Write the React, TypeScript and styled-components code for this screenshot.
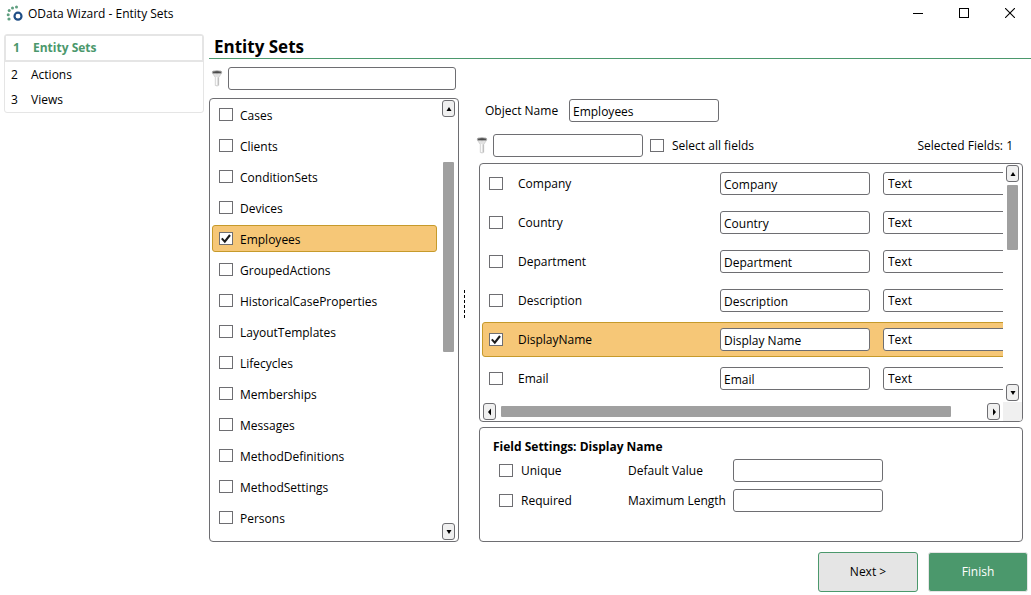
import React, { useState } from 'react';
import styled, { createGlobalStyle, css } from 'styled-components';

const GREEN = '#4b986c';
const LINE = '#6e6e72';

const Global = createGlobalStyle`
  *, *::before, *::after { box-sizing: border-box; }
  body { margin: 0; background: #fff; }
  body, button, input, select {
    font-family: "Open Sans", "Noto Sans", sans-serif;
    font-size: 12px;
    line-height: 16px;
    color: #000;
  }
`;

const Window = styled.div`
  display: flex;
  flex-direction: column;
  height: 100vh;
  min-height: 560px;
  overflow: hidden;
`;

const TitleBar = styled.header`
  display: flex;
  align-items: center;
  flex: none;
  height: 28px;
  padding-left: 6px;
  gap: 5px;
`;

const TitleText = styled.span`
  flex: 1;
`;

const CaptionButton = styled.button`
  display: flex;
  align-items: center;
  justify-content: center;
  width: 46px;
  height: 28px;
  padding: 0 0 2px 4px;
  border: 0;
  background: none;
`;

const Body = styled.div`
  display: flex;
  flex: 1;
  min-height: 0;
  gap: 5px;
  padding-left: 4px;
`;

const Steps = styled.nav`
  flex: none;
  align-self: flex-start;
  width: 200px;
  margin-top: 6px;
  border: 1px solid #e5e5e5;
  border-radius: 3px;
`;

const Step = styled.a<{ $active?: boolean }>`
  display: flex;
  align-items: center;
  height: 25px;
  padding-left: 6px;
  color: #000;
  text-decoration: none;
  ${p => p.$active && css`
    height: 27px;
    padding-left: 7px;
    border: 1px solid #e5e5e5;
    border-bottom-width: 2px;
    color: ${GREEN};
    font-weight: 700;
  `}
`;

const StepNumber = styled.span`
  width: 20px;
`;

const Main = styled.main`
  display: flex;
  flex-direction: column;
  flex: 1;
  min-width: 0;
`;

const Heading = styled.h1`
  flex: none;
  height: 31px;
  margin: 0;
  padding: 7px 5px 0;
  border-bottom: 1px solid ${GREEN};
  font-size: 17px;
  line-height: 24px;
`;

const Columns = styled.div`
  display: flex;
  flex: 1;
  min-height: 0;
  padding: 8px 8px 0 0;
`;

const ListColumn = styled.section`
  display: flex;
  flex-direction: column;
  flex: none;
  width: 250px;
  gap: 8px;
`;

const DetailColumn = styled.section`
  display: flex;
  flex-direction: column;
  flex: 1;
  min-width: 0;
  padding-top: 32px;
`;

const Row = styled.div`
  display: flex;
  align-items: center;
`;

const FilterRow = styled(Row)`
  padding: 0 3px 0 2px;
  gap: 5px;
`;

const TextBox = styled.input<{ $grow?: boolean }>`
  ${p => (p.$grow ? 'flex: 1; min-width: 0;' : 'flex: none; width: 150px;')}
  height: 23px;
  padding: 2px 3px 0;
  border: 1px solid ${LINE};
  border-radius: 3px;
  background: #fff;
  outline: none;
`;

const Panel = styled.div`
  display: flex;
  min-height: 0;
  border: 1px solid ${LINE};
  border-radius: 4px;
  overflow: hidden;
`;

const ListPanel = styled(Panel)`
  flex: 1;
  padding: 1px 3px 1px 2px;
`;

const Items = styled.ul`
  display: flex;
  flex-direction: column;
  flex: 1;
  gap: 4px;
  margin: 1px 5px 0 0;
  padding: 0;
  list-style: none;
  overflow: hidden;
`;

const selected = css`
  border-color: #c69a2b;
  background: #f6c777;
`;

const Item = styled.li<{ $selected: boolean }>`
  flex: none;
  height: 27px;
  padding: 0 6px;
  border: 1px solid transparent;
  border-radius: 3px;
  ${p => p.$selected && selected}
`;

const CheckLabel = styled.label<{ $gap?: number }>`
  display: flex;
  align-items: center;
  height: 100%;
  gap: ${p => p.$gap ?? 7}px;
`;

const CheckText = styled.span`
  ${Item} & { padding-top: 2px; }
`;

const CheckFrame = styled.span`
  display: grid;
  flex: none;
  width: 14px;
  height: 13px;
  & > * { grid-area: 1 / 1; }
  svg { width: 14px; height: 13px; pointer-events: none; }
`;

const CheckInput = styled.input`
  appearance: none;
  width: 14px;
  height: 13px;
  margin: 0;
  border: 1px solid ${LINE};
  background: #fff;
  & + svg { visibility: hidden; }
  &:checked + svg { visibility: visible; }
`;

const ScrollBar = styled.div<{ $horizontal?: boolean }>`
  display: flex;
  flex: none;
  align-items: center;
  flex-direction: ${p => (p.$horizontal ? 'row' : 'column')};
  ${p => (p.$horizontal ? 'height: 19px;' : 'width: 13px;')}
`;

const ScrollButton = styled.button`
  display: flex;
  flex: none;
  align-items: center;
  justify-content: center;
  width: 13px;
  height: 17px;
  padding: 0;
  border: 1px solid ${LINE};
  border-radius: 3px;
  background: #f0f0f0;
`;

const Track = styled.div<{ $horizontal?: boolean }>`
  display: flex;
  flex: 1;
  flex-direction: ${p => (p.$horizontal ? 'row' : 'column')};
  min-width: 0;
  min-height: 0;
  padding: ${p => (p.$horizontal ? '0 4px' : '3px 0')};
`;

const Space = styled.span<{ $size: number }>`
  flex: ${p => p.$size} 1 0;
`;

const Thumb = styled.span<{ $size: number }>`
  flex: ${p => p.$size} 1 0;
  min-width: 11px;
  min-height: 11px;
  border-radius: 1px;
  background: #a0a0a0;
`;

const Splitter = styled.div`
  display: flex;
  flex: none;
  align-items: center;
  width: 20px;
  padding: 0 0 2px 5px;
`;

const Dots = styled.span`
  width: 1px;
  height: 28px;
  background: repeating-linear-gradient(#000 0 3px, transparent 3px 5px);
`;

const ObjectRow = styled(Row)`
  padding-left: 6px;
`;

const ObjectLabel = styled.label`
  width: 84px;
`;

const FieldFilterRow = styled(Row)`
  margin: 12px 0 6px -3px;
  gap: 5px;
  & > label { margin-left: 2px; }
`;

const SelectedCount = styled.span`
  margin-left: auto;
  padding-right: 10px;
`;

const FieldsPanel = styled(Panel)`
  flex: 1;
`;

const FieldsMain = styled.div`
  display: flex;
  flex: 1;
  flex-direction: column;
  min-width: 0;
  padding-left: 2px;
`;

const FieldRows = styled.div`
  display: flex;
  flex: 1;
  flex-direction: column;
  gap: 4px;
  min-height: 0;
  padding-top: 2px;
  overflow: hidden;
`;

const FieldRow = styled(Row)<{ $selected: boolean }>`
  flex: none;
  width: 580px;
  height: 35px;
  padding: 0 6px;
  border: 1px solid transparent;
  border-radius: 3px;
  ${p => p.$selected && selected}
`;

const FieldName = styled.div`
  width: 231px;
`;

const TypeSelect = styled.select`
  appearance: none;
  width: 150px;
  height: 23px;
  margin-left: 13px;
  padding: 0 4px;
  border: 1px solid ${LINE};
  border-radius: 3px;
  background: #fff;
`;

const FieldsSide = styled.div`
  display: flex;
  flex: none;
  flex-direction: column;
  align-items: center;
  width: 19px;
  padding-top: 1px;
  & > :first-child { flex: 1; }
`;

const Corner = styled.div`
  align-self: stretch;
  height: 19px;
  margin-top: 1px;
  background: #f0f0f0;
`;

const HScrollPad = styled.div`
  padding: 0 3px 0 1px;
`;

const SettingsPanel = styled(Panel)`
  flex: none;
  flex-direction: column;
  height: 115px;
  margin-top: 5px;
  padding: 11px 13px;
`;

const SettingsTitle = styled.h2`
  margin: 0 0 4px;
  font-size: 12px;
  line-height: 16px;
`;

const SettingsGrid = styled.div`
  display: grid;
  grid-template-columns: 129px 105px 150px;
  grid-auto-rows: 23px;
  row-gap: 7px;
  align-items: center;
  padding-left: 6px;
`;

const Footer = styled.footer`
  display: flex;
  flex: none;
  align-items: center;
  justify-content: flex-end;
  gap: 10px;
  padding: 10px 3px 3px;
`;

const ActionButton = styled.button<{ $primary?: boolean }>`
  width: 100px;
  height: 40px;
  border: 1px solid ${p => (p.$primary ? '#e5e5e5' : GREEN)};
  border-radius: 3px;
  background: ${p => (p.$primary ? GREEN : '#e5e5e5')};
  color: ${p => (p.$primary ? '#fff' : '#000')};
`;

const Logo = () => (
  <svg width="17" height="18" viewBox="0 0 17 18">
    <g fill="#5f9f80">
      <circle cx="10.5" cy="2" r="1.5" />
      <circle cx="6.5" cy="3" r="1.5" />
      <circle cx="3.2" cy="5.6" r="1.5" />
      <circle cx="2.2" cy="9.7" r="1.5" />
      <circle cx="3" cy="14" r="1.6" />
    </g>
    <circle cx="12" cy="11.2" r="3.5" fill="none" stroke="#1f4e86" strokeWidth="2.2" />
  </svg>
);

const Funnel = () => (
  <svg width="12" height="17" viewBox="0 0 12 17" aria-hidden="true">
    <path d="M1 2.5 L4.3 7.5 V15.5 Q6 16.5 7.7 15.5 V7.5 L11 2.5 Z" fill="#e2e2e2" stroke="#c8c8c8" strokeWidth=".7" />
    <path d="M5.6 7 V15" stroke="#fafafa" strokeWidth="1.4" />
    <path d="M7.3 7.5 V15" stroke="#b4b4b4" strokeWidth=".8" />
    <ellipse cx="6" cy="2.2" rx="5" ry="1.5" fill="#4a4a4a" stroke="#b5b5b5" strokeWidth=".9" />
  </svg>
);

type Direction = 'up' | 'down' | 'left' | 'right';

const arrows: Record<Direction, string> = {
  up: 'M4 2 L6.5 6 H1.5 Z',
  down: 'M4 6 L6.5 2 H1.5 Z',
  left: 'M2 4 L5 0.5 V7.5 Z',
  right: 'M6 4 L3 0.5 V7.5 Z',
};

const Arrow = ({ to }: { to: Direction }) => (
  <ScrollButton type="button" aria-label={`Scroll ${to}`}>
    <svg width="8" height="8" viewBox="0 0 8 8"><path d={arrows[to]} /></svg>
  </ScrollButton>
);

type ScrollerProps = { horizontal?: boolean; before: number; size: number; after: number };

const Scroller = ({ horizontal, before, size, after }: ScrollerProps) => (
  <ScrollBar $horizontal={horizontal}>
    <Arrow to={horizontal ? 'left' : 'up'} />
    <Track $horizontal={horizontal}>
      <Space $size={before} />
      <Thumb $size={size} />
      <Space $size={after} />
    </Track>
    <Arrow to={horizontal ? 'right' : 'down'} />
  </ScrollBar>
);

type CheckProps = { label: string; gap?: number; checked: boolean; onChange: (v: boolean) => void };

const Check = ({ label, gap, checked, onChange }: CheckProps) => (
  <CheckLabel $gap={gap}>
    <CheckFrame>
      <CheckInput type="checkbox" checked={checked} onChange={e => onChange(e.target.checked)} />
      <svg viewBox="0 0 14 13"><path d="M2.8 6.4 L5.8 9.6 L11 3" fill="none" stroke="#1c1c1c" strokeWidth="2.1" /></svg>
    </CheckFrame>
    <CheckText>{label}</CheckText>
  </CheckLabel>
);

const entitySets = [
  'Cases', 'Clients', 'ConditionSets', 'Devices', 'Employees', 'GroupedActions',
  'HistoricalCaseProperties', 'LayoutTemplates', 'Lifecycles', 'Memberships',
  'Messages', 'MethodDefinitions', 'MethodSettings', 'Persons',
];

const fields = [
  ['Company', 'Company'],
  ['Country', 'Country'],
  ['Department', 'Department'],
  ['Description', 'Description'],
  ['DisplayName', 'Display Name'],
  ['Email', 'Email'],
];

export default function App() {
  const [checked, setChecked] = useState<Record<string, boolean>>({ Employees: true, 'field:DisplayName': true });
  const bind = (key: string) => ({
    checked: !!checked[key],
    onChange: (v: boolean) => setChecked(c => ({ ...c, [key]: v })),
  });
  const count = fields.filter(([name]) => checked[`field:${name}`]).length;

  return (
    <Window>
      <Global />
      <TitleBar>
        <Logo />
        <TitleText>OData Wizard - Entity Sets</TitleText>
        <Row>
          <CaptionButton type="button" aria-label="Minimize">
            <svg width="10" height="10"><path d="M0 5.5 H10" stroke="#000" /></svg>
          </CaptionButton>
          <CaptionButton type="button" aria-label="Maximize">
            <svg width="10" height="10"><rect x=".5" y=".5" width="9" height="9" fill="none" stroke="#000" /></svg>
          </CaptionButton>
          <CaptionButton type="button" aria-label="Close">
            <svg width="10" height="10"><path d="M0 0 L10 10 M10 0 L0 10" stroke="#000" strokeWidth="1.1" /></svg>
          </CaptionButton>
        </Row>
      </TitleBar>
      <Body>
        <Steps>
          <Step href="#entity-sets" $active><StepNumber>1</StepNumber>Entity Sets</Step>
          <Step href="#actions"><StepNumber>2</StepNumber>Actions</Step>
          <Step href="#views"><StepNumber>3</StepNumber>Views</Step>
        </Steps>
        <Main>
          <Heading>Entity Sets</Heading>
          <Columns>
            <ListColumn>
              <FilterRow>
                <Funnel />
                <TextBox $grow aria-label="Filter entity sets" />
              </FilterRow>
              <ListPanel>
                <Items>
                  {entitySets.map(name => (
                    <Item key={name} $selected={name === 'Employees'}>
                      <Check label={name} {...bind(name)} />
                    </Item>
                  ))}
                </Items>
                <Scroller before={42} size={190} after={168} />
              </ListPanel>
            </ListColumn>
            <Splitter><Dots /></Splitter>
            <DetailColumn>
              <ObjectRow>
                <ObjectLabel htmlFor="object-name">Object Name</ObjectLabel>
                <TextBox id="object-name" defaultValue="Employees" />
              </ObjectRow>
              <FieldFilterRow>
                <Funnel />
                <TextBox aria-label="Filter fields" />
                <Check label="Select all fields" gap={8} {...bind('all')} />
                <SelectedCount>Selected Fields: {count}</SelectedCount>
              </FieldFilterRow>
              <FieldsPanel>
                <FieldsMain>
                  <FieldRows>
                    {fields.map(([name, title]) => (
                      <FieldRow key={name} $selected={name === 'DisplayName'}>
                        <FieldName>
                          <Check label={name} gap={15} {...bind(`field:${name}`)} />
                        </FieldName>
                        <TextBox aria-label={`${name} title`} defaultValue={title} />
                        <TypeSelect aria-label={`${name} type`}><option>Text</option></TypeSelect>
                      </FieldRow>
                    ))}
                  </FieldRows>
                  <HScrollPad>
                    <Scroller horizontal before={1} size={450} after={32} />
                  </HScrollPad>
                </FieldsMain>
                <FieldsSide>
                  <Scroller before={0} size={65} after={131} />
                  <Corner />
                </FieldsSide>
              </FieldsPanel>
              <SettingsPanel>
                <SettingsTitle>Field Settings: Display Name</SettingsTitle>
                <SettingsGrid>
                  <Check label="Unique" gap={8} {...bind('unique')} />
                  <label htmlFor="default-value">Default Value</label>
                  <TextBox id="default-value" />
                  <Check label="Required" gap={8} {...bind('required')} />
                  <label htmlFor="max-length">Maximum Length</label>
                  <TextBox id="max-length" />
                </SettingsGrid>
              </SettingsPanel>
            </DetailColumn>
          </Columns>
          <Footer>
            <ActionButton type="button">Next &gt;</ActionButton>
            <ActionButton type="button" $primary>Finish</ActionButton>
          </Footer>
        </Main>
      </Body>
    </Window>
  );
}
